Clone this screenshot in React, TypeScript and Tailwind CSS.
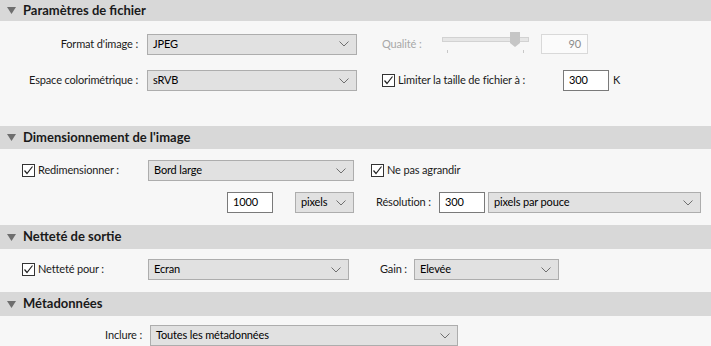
import React from 'react';

function Chevron() {
  return (
    <svg width="10" height="6" viewBox="0 0 10 6" className="shrink-0">
      <polyline points="0.5,0.5 5,5 9.5,0.5" fill="none" stroke="#6f6f6f" strokeWidth="1" />
    </svg>
  );
}

function Select({ value, className }: { value: string; className: string }) {
  return (
    <div className={`h-[21px] flex items-center justify-between pl-[5px] pr-[7px] border border-[#adadad] bg-[#e1e1e1] text-black ${className}`}>
      <span>{value}</span>
      <Chevron />
    </div>
  );
}

function Input({ value, className }: { value: string; className: string }) {
  return (
    <div className={`h-[21px] flex items-center pl-[5px] border border-[#7a7a7a] bg-white text-black ${className}`}>{value}</div>
  );
}

function Check({ label }: { label: string }) {
  return (
    <div className="flex items-center gap-[3px] whitespace-nowrap">
      <div className="w-[13px] h-[13px] border border-[#333] bg-white flex items-center justify-center">
        <svg width="11" height="11" viewBox="0 0 11 11">
          <polyline points="1.5,5.5 4,8.5 9.5,1.5" fill="none" stroke="#222" strokeWidth="1.2" />
        </svg>
      </div>
      <span>{label}</span>
    </div>
  );
}

function Header({ title, h }: { title: string; h: string }) {
  return (
    <div className={`${h} bg-[#d8d8d8] flex items-center pl-[7px] gap-[7px]`}>
      <svg width="9" height="7" viewBox="0 0 9 7">
        <polygon points="0,0 9,0 4.5,7" fill="#6e6e6e" />
      </svg>
      <span className="font-bold text-[#1a1a1a] text-[13px] tracking-normal">{title}</span>
    </div>
  );
}

function Slider() {
  return (
    <svg width="90" height="24" viewBox="0 0 90 24" className="shrink-0">
      <rect x="0.5" y="5.5" width="86" height="4" fill="#e6e6e6" stroke="#d2d2d2" />
      <polygon points="68,0 78,0 78,11 73,15 68,11" fill="#c6c6c6" />
      <line x1="5.5" y1="18" x2="5.5" y2="21" stroke="#c8c8c8" />
      <line x1="81.5" y1="18" x2="81.5" y2="21" stroke="#c8c8c8" />
    </svg>
  );
}

export default function App() {
  return (
    <div className="w-[711px] h-[346px] overflow-hidden bg-[#f7f7f7] text-[11px] tracking-[-0.15px] text-[#1a1a1a] whitespace-nowrap font-['Lato','Liberation_Sans',sans-serif]">
      <Header title="Paramètres de fichier" h="h-[21px]" />
      <div className="h-[105px] pt-[11px] flex flex-col gap-[14px]">
        <div className="flex items-center">
          <div className="w-[138px] text-right">Format d'image :</div>
          <Select value="JPEG" className="ml-[9px] w-[210px]" />
          <div className="ml-[25px] w-[60px] text-[#a8a8a8]">Qualité :</div>
          <Slider />
          <div className="ml-[9px] w-[47px] h-[20px] border border-[#d9d9d9] bg-[#fbfbfb] text-[#8c8c8c] flex items-center justify-end pr-[6px]">90</div>
        </div>
        <div className="flex items-center">
          <div className="w-[138px] text-right">Espace colorimétrique :</div>
          <Select value="sRVB" className="ml-[9px] w-[210px]" />
          <div className="ml-[25px] w-[181px]">
            <Check label="Limiter la taille de fichier à :" />
          </div>
          <Input value="300" className="w-[46px]" />
          <span className="ml-[4px]">K</span>
        </div>
      </div>

      <Header title="Dimensionnement de l'image" h="h-[23px]" />
      <div className="h-[76px] pt-[11px] flex flex-col gap-[11px]">
        <div className="flex items-center">
          <div className="ml-[22px] w-[126px]">
            <Check label="Redimensionner :" />
          </div>
          <Select value="Bord large" className="w-[206px]" />
          <div className="ml-[17px]">
            <Check label="Ne pas agrandir" />
          </div>
        </div>
        <div className="flex items-center">
          <Input value="1000" className="ml-[227px] w-[46px]" />
          <Select value="pixels" className="ml-[22px] w-[59px]" />
          <div className="ml-[22px] w-[63px]">Résolution :</div>
          <Input value="300" className="w-[46px]" />
          <Select value="pixels par pouce" className="ml-[3px] w-[213px]" />
        </div>
      </div>

      <Header title="Netteté de sortie" h="h-[24px]" />
      <div className="h-[43px] pt-[10px]">
        <div className="flex items-center">
          <div className="ml-[22px] w-[126px]">
            <Check label="Netteté pour :" />
          </div>
          <Select value="Ecran" className="w-[201px]" />
          <div className="ml-[31px] w-[34px]">Gain :</div>
          <Select value="Elevée" className="w-[145px]" />
        </div>
      </div>

      <Header title="Métadonnées" h="h-[24px]" />
      <div className="pt-[9px]">
        <div className="flex items-center">
          <div className="w-[142px] text-right">Inclure :</div>
          <Select value="Toutes les métadonnées" className="ml-[8px] w-[308px]" />
        </div>
      </div>
    </div>
  );
}
